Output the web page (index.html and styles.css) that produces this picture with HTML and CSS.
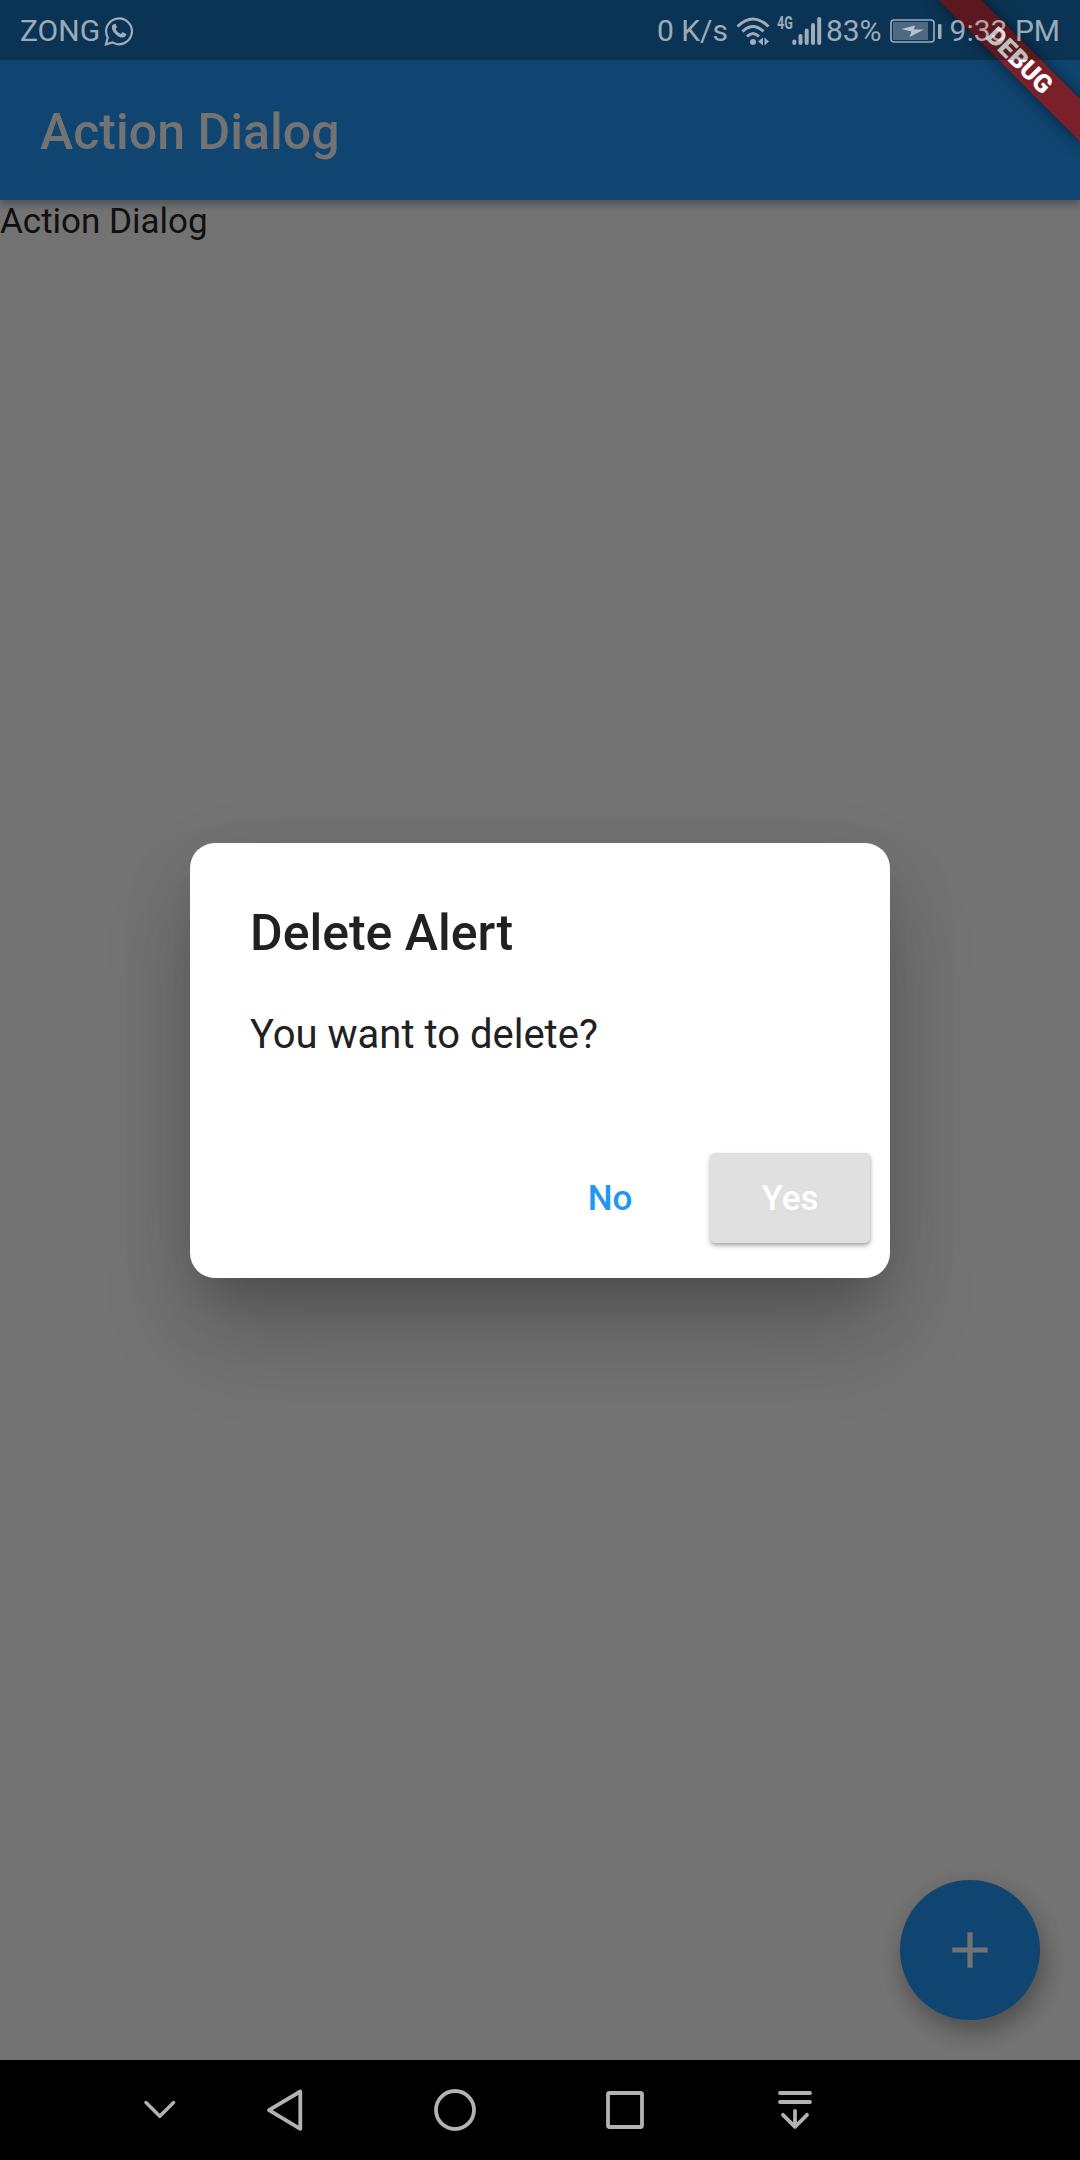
FILE: index.html
```html
<!DOCTYPE html>
<html lang="en">
<head>
<meta charset="utf-8">
<title>Action Dialog</title>
<link rel="stylesheet" href="styles.css">
</head>
<body>
<div class="screen">
  <header class="top">
    <div class="status">
      <span class="carrier">ZONG</span>
      <svg class="whatsapp" viewBox="0 0 30 30" width="30" height="30"><path d="M2 28.300L3.700 21.500A12.900 12.900 0 1 1 8.400 26.400Z" fill="none" stroke="currentColor" stroke-width="2.200"/><path d="M9.500 8.200C7 10 7.500 13 10 16.500C13.500 21 18.500 23 21.500 20.300L22.500 18.200L18.600 16.100L16.800 18C14.500 17 12.600 15.200 11.500 13L13 11.200L11.500 7.800Z" fill="currentColor"/></svg>
      <span class="rate">0 K/s</span>
      <svg class="wifi" viewBox="0 0 34 30" width="34" height="30"><g fill="none" stroke="currentColor" stroke-width="3"><path d="M1.500 10.500Q17 -4.500 32.500 10.500"/><path d="M6.500 15.500Q17 5.500 27.500 15.500"/><path d="M11 20.500Q17 14.500 23 20.500"/></g><circle cx="17" cy="26" r="3"/><path d="M22 25.500L27 21.500V29.500ZM33 25.500L28.500 21.500V29.500Z"/></svg>
      <span class="net">4G</span>
      <svg class="signal" viewBox="0 0 30 28" width="30" height="28"><path d="M2.300 24.500V26M8.500 19V26M14.700 13.500V26M21 8V26M27.200 2V26" stroke="currentColor" stroke-width="4" stroke-linecap="round"/></svg>
      <span class="percent">83%</span>
      <svg class="battery" viewBox="0 0 52 24" width="52" height="24"><rect x="1" y="1" width="43" height="22" rx="3" fill="none" stroke="currentColor" stroke-width="1.600"/><rect x="3" y="3" width="35" height="18" opacity=".45"/><path d="M11.500 10L25 6.500L24 10.500H34L19.500 18L21.500 12.500Z"/><rect x="48" y="5" width="3.500" height="15" rx="1"/></svg>
      <span class="clock">9:33 PM</span>
    </div>
    <h1 class="title">Action Dialog</h1>
  </header>
  <main class="body">
    <p class="label">Action Dialog</p>
    <section class="dialog">
      <h2 class="dialog-title">Delete Alert</h2>
      <p class="dialog-text">You want to delete?</p>
      <div class="actions">
        <button class="btn no">No</button>
        <button class="btn yes">Yes</button>
      </div>
    </section>
    <button class="fab" aria-label="Add"><svg viewBox="0 0 60 60" width="60" height="60"><path d="M12.300 30H47.700M30 12.300V47.700" stroke="currentColor" stroke-width="5.200"/></svg></button>
  </main>
  <nav class="nav">
    <svg viewBox="0 0 60 60"><path d="M16 22.500L29.800 36.300L43.600 22.500" stroke-width="3.500"/></svg>
    <svg viewBox="0 0 60 60"><path d="M14 30.200L45.300 11.500V48.800Z" stroke-width="3.800"/></svg>
    <svg viewBox="0 0 60 60"><circle cx="30" cy="30" r="19" stroke-width="3.800"/></svg>
    <svg viewBox="0 0 60 60"><rect x="13" y="13" width="34" height="34" rx="1.500" stroke-width="3.800"/></svg>
    <svg viewBox="0 0 60 60"><path d="M15 13H45M15 22H45M30 31V46M18 34.800L30 46.800L42 34.800" stroke-width="3.800"/></svg>
  </nav>
  <div class="ribbon">DEBUG</div>
  <div class="scrim"></div>
</div>
</body>
</html>
```
FILE: styles.css
```css
* { box-sizing: border-box; }
body { margin: 0; font-family: Roboto, sans-serif; }
h1, h2, p { margin: 0; }
button { border: 0; font: inherit; padding: 0; }
.screen {
  position: relative;
  width: 1080px;
  height: 2160px;
  display: flex;
  flex-direction: column;
  overflow: hidden;
  background: #737373;
}
.top {
  position: relative;
  background: #0f4570;
  box-shadow: 0 5px 6px rgba(0, 0, 0, .17), 0 2px 12px rgba(0, 0, 0, .15);
}
.status {
  position: relative;
  z-index: 3;
  height: 60px;
  padding: 1px 20px 0;
  display: flex;
  align-items: center;
  color: rgba(255, 255, 255, .6);
  font-size: 30px;
  line-height: 59px;
  white-space: nowrap;
}
.status svg { flex: none; fill: currentColor; }
.whatsapp { margin-left: 4px; }
.rate { margin-left: auto; }
.wifi { margin-left: 8px; }
.net {
  margin: -16px 0 0 7px;
  width: 15px;
  font: 700 18px/20px Roboto, sans-serif;
  transform: scaleX(.7);
  transform-origin: 0 50%;
}
.signal { margin-left: 0; }
.percent { margin-left: 4px; }
.battery { margin-left: 8px; }
.clock { margin-left: 8px; }
.title {
  height: 140px;
  padding-left: 40px;
  color: #737373;
  font-size: 50px;
  font-weight: 500;
  line-height: 144px;
  letter-spacing: .04px;
}
.body { flex: 1; display: flex; flex-direction: column; }
.label {
  height: 41px;
  color: #101010;
  font-size: 35px;
  line-height: 43px;
}
.dialog {
  width: 700px;
  height: 435px;
  margin: 601.500px auto 0;
  display: flex;
  flex-direction: column;
  border-radius: 25px;
  background: #fff;
  color: #212121;
  box-shadow: 0 27px 37px -17px rgba(0, 0, 0, .12), 0 60px 95px -5px rgba(0, 0, 0, .18), 0 22px 80px -5px rgba(0, 0, 0, .12);
}
.dialog-title {
  padding: 61px 60px 0;
  font-size: 50px;
  font-weight: 500;
  line-height: 59px;
}
.dialog-text {
  padding: 48px 60px 0;
  font-size: 40px;
  line-height: 47px;
}
.actions {
  margin-top: auto;
  padding: 0 20px 35px 0;
  display: flex;
  justify-content: flex-end;
  gap: 20px;
}
.btn {
  width: 160px;
  height: 90px;
  padding-top: 1px;
  border-radius: 5px;
  background: none;
  font-size: 35px;
  font-weight: 500;
}
.no { color: #2196f3; }
.yes {
  background: #e0e0e0;
  color: #fff;
  box-shadow: 0 3px 5px rgba(0, 0, 0, .28), 1px 1px 3px rgba(0, 0, 0, .1);
}
.fab {
  width: 140px;
  height: 140px;
  margin: auto 40px 40px auto;
  display: grid;
  place-items: center;
  border-radius: 50%;
  background: #0f4570;
  color: #737373;
  box-shadow: 4px 13px 22px rgba(0, 0, 0, .24), 2px 5px 26px rgba(0, 0, 0, .1);
}
.nav {
  position: relative;
  height: 100px;
  padding: 0 0 0 130px;
  display: grid;
  grid-template-columns: 125px 170px 170px 170px 60px;
  align-items: center;
  background: #000;
}
.nav svg {
  width: 60px;
  height: 60px;
  fill: none;
  stroke: #b2b2b2;
  stroke-linecap: round;
  stroke-linejoin: round;
}
/* Diagonal debug banner pinned to the top right corner */
.ribbon {
  position: absolute;
  z-index: 1;
  left: 980px;
  top: 70px;
  width: 200px;
  height: 30px;
  transform: rotate(45deg);
  transform-origin: 100px -70px;
  background: #7a202a;
  box-shadow: 0 0 15px rgba(0, 0, 0, .5);
  color: #fff;
  font-size: 25.500px;
  font-weight: 900;
  line-height: 30px;
  text-align: center;
}
/* Status bar shade, drawn above the banner and below the status icons */
.scrim {
  position: absolute;
  z-index: 2;
  inset: 0 0 auto;
  height: 60px;
  background: rgba(0, 0, 0, .25);
}
```
